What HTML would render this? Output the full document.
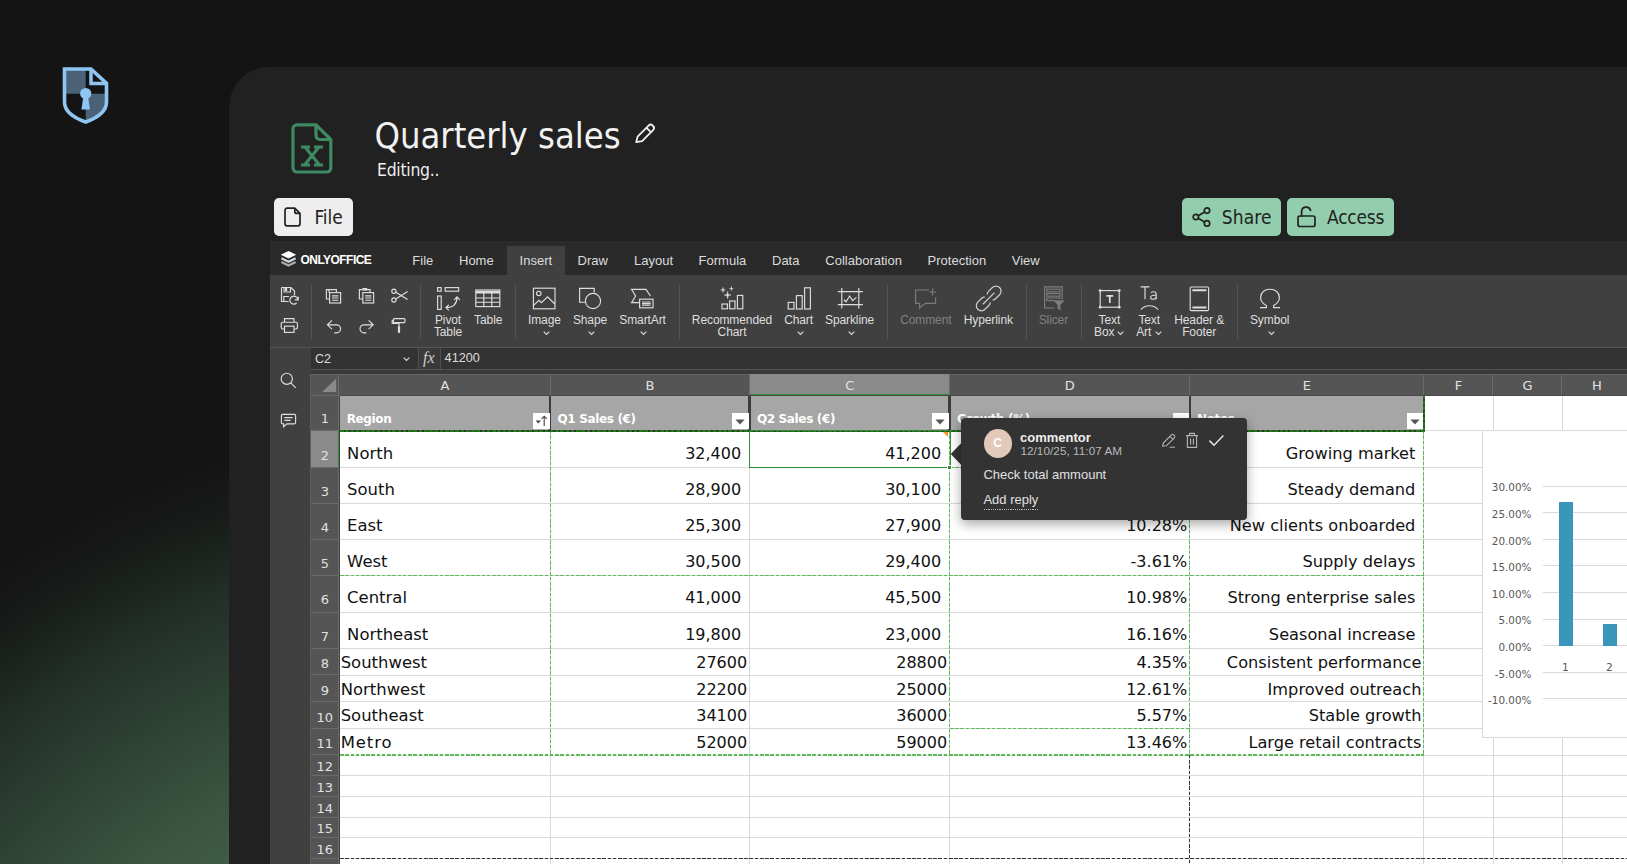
<!DOCTYPE html>
<html lang="en"><head><meta charset="utf-8"><title>Quarterly sales</title>
<style>
html,body{margin:0;padding:0;width:1627px;height:864px;overflow:hidden}
body{width:1627px;height:864px;overflow:hidden;position:relative;background:#141414;font-family:"Liberation Sans",sans-serif;}
#bg{position:absolute;left:0;top:0;width:1627px;height:864px;background:radial-gradient(circle 885px at 500px 1300px, #3f5c47 0%, #3f5c47 58%, #38523f 66%, #2e4235 75%, #233028 85%, #1c241e 90%, #171a18 95%, #141414 100%);}
div,span.t,svg.i{position:absolute;box-sizing:border-box}
span.t{white-space:nowrap;display:block}
svg.i{overflow:visible}
#root{position:relative;left:0;top:0;width:1627px;height:864px;overflow:hidden}
</style></head><body><div id="root"><div id="bg"></div>
<svg class="i" style="left:62px;top:66px;" width="48" height="59" viewBox="0 0 48 59">
<path d="M2.5 3 H29 L44.5 17.4 V36 C44.5 46 36 51.6 23.7 56 C11 51.6 2.5 46 2.5 36 Z" fill="#141414"/>
<path d="M2.5 3 H23.7 V27.7 H2.5 Z" fill="#4a6178"/>
<path d="M23.7 27.7 H44.5 V36 C44.5 46 36 51.6 23.7 56 Z" fill="#4a6178"/>
<path d="M2.5 3 H29 L44.5 17.4 V36 C44.5 46 36 51.6 23.7 56 C11 51.6 2.5 46 2.5 36 Z" fill="none" stroke="#8ec5f2" stroke-width="3.6" stroke-linejoin="miter"/>
<path d="M29 3 V17.4 H44.5" fill="none" stroke="#8ec5f2" stroke-width="3.5"/>
<circle cx="23.7" cy="27.5" r="5.6" fill="#8ec5f2"/>
<path d="M21.4 30 H26 L28 43.4 H19.4 Z" fill="#8ec5f2"/>
</svg>
<div style="left:229px;top:67px;width:1420px;height:820px;background:#212121;border-top-left-radius:40px;"></div>
<svg class="i" style="left:290px;top:122px;" width="44" height="54" viewBox="0 0 44 54">
<path d="M7 2.8 H26 L40.8 17.5 V46 a4 4 0 0 1 -4 4 H7 a4 4 0 0 1 -4 -4 V6.8 a4 4 0 0 1 4 -4 Z" fill="none" stroke="#3f8a62" stroke-width="3.2" stroke-linejoin="round"/>
<path d="M26 2.8 V13.5 a4 4 0 0 0 4 4 H40.8" fill="none" stroke="#3f8a62" stroke-width="3.2"/>
<path d="M11 25 h9 M24 25 h9 M11 43 h9 M24 43 h9 M15 25 L29.5 43 M29 25 L14.5 43" fill="none" stroke="#3f8a62" stroke-width="3"/>
</svg>
<span class="t" style="top:111.84px;font-size:36px;line-height:47px;color:#f2f2f2;font-family:'DejaVu Sans Condensed', 'DejaVu Sans', sans-serif;left:374.5px;">Quarterly sales</span>
<span class="t" style="top:158.78px;font-size:17.4px;line-height:23px;color:#eeeeee;font-family:'DejaVu Sans Condensed', 'DejaVu Sans', sans-serif;letter-spacing:-0.25px;left:377px;">Editing..</span>
<svg class="i" style="left:633px;top:122px;" width="24" height="23" viewBox="0 0 24 23">
<path d="M3.2 20.2 L4.6 14.6 L15.6 3.6 a2.9 2.9 0 0 1 4.1 0 l0.4 0.4 a2.9 2.9 0 0 1 0 4.1 L9.1 19.1 Z M13.6 5.8 L17.9 10.1" fill="none" stroke="#f0f0f0" stroke-width="1.8" stroke-linejoin="round"/>
</svg>
<div style="left:273.7px;top:198px;width:79.3px;height:38.2px;background:#eeeeee;border-radius:5px;"></div>
<svg class="i" style="left:283px;top:206px;" width="20" height="22" viewBox="0 0 20 22"><path d="M4 2.2 H11.8 L17 7.4 V17.8 a2 2 0 0 1 -2 2 H4 a2 2 0 0 1 -2 -2 V4.2 a2 2 0 0 1 2 -2 Z M11.8 2.2 V5.4 a2 2 0 0 0 2 2 H17" fill="none" stroke="#222" stroke-width="1.7" stroke-linejoin="round"/></svg>
<span class="t" style="top:204.53px;font-size:19px;line-height:25px;color:#222;font-family:'DejaVu Sans Condensed', 'DejaVu Sans', sans-serif;left:314.4px;">File</span>
<div style="left:1181.5px;top:198px;width:99.4px;height:38.2px;background:#92ceae;border-radius:5px;"></div>
<svg class="i" style="left:1191px;top:206px;" width="22" height="22" viewBox="0 0 22 22"><circle cx="16" cy="4.6" r="2.7" fill="none" stroke="#222" stroke-width="1.7"/><circle cx="4.8" cy="11" r="2.7" fill="none" stroke="#222" stroke-width="1.7"/><circle cx="16" cy="17.4" r="2.7" fill="none" stroke="#222" stroke-width="1.7"/><path d="M7.2 9.7 L13.6 6 M7.2 12.3 L13.6 16" stroke="#222" stroke-width="1.7"/></svg>
<span class="t" style="top:204.53px;font-size:19px;line-height:25px;color:#222;font-family:'DejaVu Sans Condensed', 'DejaVu Sans', sans-serif;letter-spacing:0.15px;left:1221.7px;">Share</span>
<div style="left:1286.8px;top:198px;width:107.4px;height:38.2px;background:#92ceae;border-radius:5px;"></div>
<svg class="i" style="left:1296px;top:205px;" width="22" height="24" viewBox="0 0 22 24"><rect x="2" y="11" width="17" height="10.5" rx="2" fill="none" stroke="#222" stroke-width="1.7"/><path d="M5.6 11 V6.6 a4.6 4.6 0 0 1 9 -1.2" fill="none" stroke="#222" stroke-width="1.7" stroke-linecap="round"/></svg>
<span class="t" style="top:204.53px;font-size:19px;line-height:25px;color:#222;font-family:'DejaVu Sans Condensed', 'DejaVu Sans', sans-serif;letter-spacing:-0.2px;left:1327px;">Access</span>
<div style="left:270px;top:241px;width:1400px;height:640px;background:#404040;"></div>
<div style="left:270px;top:241px;width:1400px;height:34px;background:#2a2a2a;"></div>
<div style="left:507px;top:245.5px;width:58px;height:29.5px;background:#404040;"></div>
<svg class="i" style="left:280px;top:250px;" width="17" height="17" viewBox="0 0 17 17">
<path d="M8.5 1 L16.2 4.8 L8.5 8.6 L0.8 4.8 Z" fill="#fff"/>
<path d="M1.4 8.3 L8.5 11.8 L15.6 8.3" fill="none" stroke="#d6d6d6" stroke-width="2.1"/>
<path d="M1.4 12 L8.5 15.5 L15.6 12" fill="none" stroke="#ababab" stroke-width="2.1"/>
</svg>
<span class="t" style="top:251.65px;font-size:12px;line-height:16px;color:#ffffff;font-weight:700;letter-spacing:-0.55px;left:300.5px;">ONLYOFFICE</span>
<span class="t" style="top:252.40px;font-size:13px;line-height:17px;color:#dcdcdc;left:412.3px;">File</span>
<span class="t" style="top:252.40px;font-size:13px;line-height:17px;color:#dcdcdc;left:459px;">Home</span>
<span class="t" style="top:252.40px;font-size:13px;line-height:17px;color:#dcdcdc;left:519.6px;">Insert</span>
<span class="t" style="top:252.40px;font-size:13px;line-height:17px;color:#dcdcdc;left:577.6px;">Draw</span>
<span class="t" style="top:252.40px;font-size:13px;line-height:17px;color:#dcdcdc;left:634px;">Layout</span>
<span class="t" style="top:252.40px;font-size:13px;line-height:17px;color:#dcdcdc;left:698.6px;">Formula</span>
<span class="t" style="top:252.40px;font-size:13px;line-height:17px;color:#dcdcdc;left:772px;">Data</span>
<span class="t" style="top:252.40px;font-size:13px;line-height:17px;color:#dcdcdc;left:825.3px;">Collaboration</span>
<span class="t" style="top:252.40px;font-size:13px;line-height:17px;color:#dcdcdc;left:927.6px;">Protection</span>
<span class="t" style="top:252.40px;font-size:13px;line-height:17px;color:#dcdcdc;left:1011.8px;">View</span>
<div style="left:270px;top:346.8px;width:1400px;height:1.1px;background:#565656;"></div>
<div style="left:311.2px;top:283.5px;width:1px;height:55.5px;background:#525252;"></div>
<div style="left:419.9px;top:283.5px;width:1px;height:55.5px;background:#525252;"></div>
<div style="left:515.3px;top:283.5px;width:1px;height:55.5px;background:#525252;"></div>
<div style="left:678.5px;top:283.5px;width:1px;height:55.5px;background:#525252;"></div>
<div style="left:887px;top:283.5px;width:1px;height:55.5px;background:#525252;"></div>
<div style="left:1026px;top:283.5px;width:1px;height:55.5px;background:#525252;"></div>
<div style="left:1081px;top:283.5px;width:1px;height:55.5px;background:#525252;"></div>
<div style="left:1236.8px;top:283.5px;width:1px;height:55.5px;background:#525252;"></div>
<svg class="i" style="left:280px;top:286px;" width="20" height="20" viewBox="0 0 20 20"><path d="M1.5 1.5 H11 L14.5 5 V9 M1.5 1.5 V15.5 H8.5 M4 1.5 V6 H10.5 V1.5 M3.8 15.5 V10.5 H9" fill="none" stroke="#dedede" stroke-width="1.15"/><rect x="5" y="2" width="2.2" height="3" fill="#dedede"/><path d="M17.8 13.6 a4 4 0 1 0 -1.2 3.4 M18.2 10.6 V13.9 H14.9" fill="none" stroke="#dedede" stroke-width="1.15"/></svg>
<svg class="i" style="left:280px;top:317px;" width="20" height="17" viewBox="0 0 20 17"><path d="M4.5 5 V1.6 H14 V5 M4.5 12 H2.6 a1.4 1.4 0 0 1 -1.4 -1.4 V6.6 a1.4 1.4 0 0 1 1.4 -1.4 H16 a1.4 1.4 0 0 1 1.4 1.4 V10.6 a1.4 1.4 0 0 1 -1.4 1.4 H14" fill="none" stroke="#dedede" stroke-width="1.15"/><rect x="4.5" y="9.2" width="9.5" height="6.2" fill="none" stroke="#dedede" stroke-width="1.15"/></svg>
<svg class="i" style="left:325px;top:288px;" width="18" height="17" viewBox="0 0 18 17"><path d="M4 4.4 V1.6 H11.4 V4.4 M4 11 H1.4 V1.6 H4" fill="none" stroke="#dedede" stroke-width="1.15"/><rect x="4.6" y="4.6" width="11" height="10.4" fill="none" stroke="#dedede" stroke-width="1.15"/><path d="M7 7.8 H13.4 M7 10 H13.4 M7 12.2 H13.4" fill="none" stroke="#dedede" stroke-width="1.15"/></svg>
<svg class="i" style="left:358px;top:287px;" width="18" height="18" viewBox="0 0 18 18"><path d="M4.4 12 H1.4 V2.6 H4.4 M9 2.6 H12 V5.4" fill="none" stroke="#dedede" stroke-width="1.15"/><rect x="4.4" y="1" width="4.8" height="2.6" fill="#dedede"/><rect x="4.8" y="5.6" width="10.8" height="10.4" fill="none" stroke="#dedede" stroke-width="1.15"/><path d="M7.2 8.8 H13.4 M7.2 11 H13.4 M7.2 13.2 H13.4" fill="none" stroke="#dedede" stroke-width="1.15"/></svg>
<svg class="i" style="left:391px;top:288px;" width="18" height="16" viewBox="0 0 18 16"><circle cx="2.9" cy="3.2" r="2.1" fill="none" stroke="#dedede" stroke-width="1.15"/><circle cx="2.9" cy="12" r="2.1" fill="none" stroke="#dedede" stroke-width="1.15"/><path d="M4.8 4.2 L16.6 11.6 M4.8 11 L16.6 3.4" fill="none" stroke="#dedede" stroke-width="1.15"/></svg>
<svg class="i" style="left:326px;top:319px;" width="17" height="16" viewBox="0 0 17 16"><path d="M6 1.4 L1.4 5.8 L6 10.2 M1.6 5.8 H10.6 a4 4 0 0 1 0 8 H8.2" fill="none" stroke="#dedede" stroke-width="1.15"/></svg>
<svg class="i" style="left:358px;top:319px;" width="17" height="16" viewBox="0 0 17 16"><path d="M10.6 1.4 L15.2 5.8 L10.6 10.2 M15 5.8 H6 a4 4 0 0 0 0 8 H8.4" fill="none" stroke="#dedede" stroke-width="1.15"/></svg>
<svg class="i" style="left:391px;top:317px;" width="17" height="18" viewBox="0 0 17 18"><rect x="2.4" y="1.6" width="11.6" height="4" rx="1" fill="none" stroke="#dedede" stroke-width="1.15"/><path d="M2.4 3.4 H1.2 V6.4 H8 V9" fill="none" stroke="#dedede" stroke-width="1.15"/><rect x="6.9" y="9" width="2.2" height="7" rx="0.8" fill="#dedede"/></svg>
<svg class="i" style="left:436px;top:286px;" width="26" height="26" viewBox="0 0 26 26"><rect x="1.6" y="1.6" width="3.6" height="3.6" fill="none" stroke="#dedede" stroke-width="1.15"/><rect x="9.2" y="1.6" width="13.4" height="3.6" fill="none" stroke="#dedede" stroke-width="1.15"/><rect x="1.6" y="10" width="3.6" height="13.4" fill="none" stroke="#dedede" stroke-width="1.15"/><path d="M10 21.6 C18 21.6 21 18 21 11 M18.2 13.8 L21 10.8 L23.8 13.8 M12.8 18.8 L10 21.6 L12.8 24.4" fill="none" stroke="#dedede" stroke-width="1.15"/></svg>
<span class="t" style="top:312.35px;font-size:12px;line-height:16px;color:#dedede;letter-spacing:-0.1px;left:388px;width:120px;text-align:center;">Pivot</span>
<span class="t" style="top:323.75px;font-size:12px;line-height:16px;color:#dedede;letter-spacing:-0.1px;left:388px;width:120px;text-align:center;">Table</span>
<svg class="i" style="left:475px;top:289px;" width="26" height="19" viewBox="0 0 26 19"><rect x="0.8" y="1" width="24" height="16.6" fill="none" stroke="#dedede" stroke-width="1.15"/><path d="M0.8 3.2 H24.8" stroke="#dedede" stroke-width="2.6"/><path d="M0.8 9 H24.8 M0.8 13.2 H24.8 M8.8 4 V17.6 M16.8 4 V17.6" fill="none" stroke="#dedede" stroke-width="1.15"/></svg>
<span class="t" style="top:312.35px;font-size:12px;line-height:16px;color:#dedede;letter-spacing:-0.1px;left:428.2px;width:120px;text-align:center;">Table</span>
<svg class="i" style="left:532px;top:287px;" width="25" height="23" viewBox="0 0 25 23"><rect x="1.4" y="1.2" width="21.6" height="20.6" fill="none" stroke="#dedede" stroke-width="1.15"/><circle cx="6.8" cy="6.4" r="2.2" fill="none" stroke="#dedede" stroke-width="1.15"/><path d="M1.6 18.4 L7 13.4 L9.4 15.6 L15.6 9.8 L22.8 17" fill="none" stroke="#dedede" stroke-width="1.15"/></svg>
<span class="t" style="top:312.35px;font-size:12px;line-height:16px;color:#dedede;letter-spacing:-0.1px;left:484.4px;width:120px;text-align:center;">Image</span>
<svg class="i" style="left:542.7px;top:330.6px;" width="7" height="4.5" viewBox="0 0 7 4.5"><path d="M0.7 0.7 L3.5 3.4 L6.3 0.7" fill="none" stroke="#dedede" stroke-width="1.1"/></svg>
<svg class="i" style="left:578px;top:287px;" width="25" height="23" viewBox="0 0 25 23"><path d="M8 15.2 H1.6 V1.4 H16.2 V5.6" fill="none" stroke="#dedede" stroke-width="1.15"/><circle cx="15" cy="14" r="7.6" fill="none" stroke="#dedede" stroke-width="1.15"/></svg>
<span class="t" style="top:312.35px;font-size:12px;line-height:16px;color:#dedede;letter-spacing:-0.1px;left:530px;width:120px;text-align:center;">Shape</span>
<svg class="i" style="left:587.5px;top:330.6px;" width="7" height="4.5" viewBox="0 0 7 4.5"><path d="M0.7 0.7 L3.5 3.4 L6.3 0.7" fill="none" stroke="#dedede" stroke-width="1.1"/></svg>
<svg class="i" style="left:630px;top:288px;" width="26" height="22" viewBox="0 0 26 22"><path d="M9 14.6 H1.6 L5.6 8 L1.6 1.4 H16 L20.4 8" fill="none" stroke="#dedede" stroke-width="1.15"/><rect x="9.6" y="11.2" width="13.4" height="8.6" fill="none" stroke="#dedede" stroke-width="1.15"/><path d="M12 14 H20.6 M12 15.6 H20.6 M12 17.2 H20.6" fill="none" stroke="#dedede" stroke-width="1.15"/></svg>
<span class="t" style="top:312.35px;font-size:12px;line-height:16px;color:#dedede;letter-spacing:-0.1px;left:582.6px;width:120px;text-align:center;">SmartArt</span>
<svg class="i" style="left:640.1px;top:330.6px;" width="7" height="4.5" viewBox="0 0 7 4.5"><path d="M0.7 0.7 L3.5 3.4 L6.3 0.7" fill="none" stroke="#dedede" stroke-width="1.1"/></svg>
<svg class="i" style="left:719px;top:286px;" width="27" height="25" viewBox="0 0 27 25"><rect x="3" y="18" width="5.4" height="4.8" fill="none" stroke="#dedede" stroke-width="1.15"/><rect x="10.6" y="15" width="5.4" height="7.8" fill="none" stroke="#dedede" stroke-width="1.15"/><rect x="18.4" y="9.4" width="5.4" height="13.4" fill="none" stroke="#dedede" stroke-width="1.15"/><path d="M8.6 5.4 C8.6 8 9.4 9 12 9 C9.4 9 8.6 10 8.6 12.6 C8.6 10 7.8 9 5.2 9 C7.8 9 8.6 8 8.6 5.4 Z M4 1.6 C4 3.4 4.4 4 6.2 4 C4.4 4 4 4.6 4 6.4 C4 4.6 3.6 4 1.8 4 C3.6 4 4 3.4 4 1.6 Z M12.4 0.6 C12.4 2 12.8 2.6 14.2 2.6 C12.8 2.6 12.4 3.2 12.4 4.6 C12.4 3.2 12 2.6 10.6 2.6 C12 2.6 12.4 2 12.4 0.6 Z" fill="#dedede" stroke="#dedede" stroke-width="0.6"/></svg>
<span class="t" style="top:312.35px;font-size:12px;line-height:16px;color:#dedede;letter-spacing:-0.1px;left:672px;width:120px;text-align:center;">Recommended</span>
<span class="t" style="top:323.75px;font-size:12px;line-height:16px;color:#dedede;letter-spacing:-0.1px;left:672px;width:120px;text-align:center;">Chart</span>
<svg class="i" style="left:786px;top:286px;" width="26" height="25" viewBox="0 0 26 25"><rect x="2.2" y="16.4" width="5.8" height="6.6" fill="none" stroke="#dedede" stroke-width="1.15"/><rect x="10.4" y="9.6" width="5.8" height="13.4" fill="none" stroke="#dedede" stroke-width="1.15"/><rect x="18.6" y="1.8" width="5.8" height="21.2" fill="none" stroke="#dedede" stroke-width="1.15"/></svg>
<span class="t" style="top:312.35px;font-size:12px;line-height:16px;color:#dedede;letter-spacing:-0.1px;left:738.6px;width:120px;text-align:center;">Chart</span>
<svg class="i" style="left:796.5px;top:330.6px;" width="7" height="4.5" viewBox="0 0 7 4.5"><path d="M0.7 0.7 L3.5 3.4 L6.3 0.7" fill="none" stroke="#dedede" stroke-width="1.1"/></svg>
<svg class="i" style="left:837px;top:287px;" width="27" height="23" viewBox="0 0 27 23"><path d="M0.8 4.6 H25.8 M0.8 17.6 H25.8 M4.8 1 V21.4 M21.8 1 V21.4 M6.8 12.8 L9 14.8 L12.6 9 L15.6 13.6 L19.4 10.4" fill="none" stroke="#dedede" stroke-width="1.15"/></svg>
<span class="t" style="top:312.35px;font-size:12px;line-height:16px;color:#dedede;letter-spacing:-0.1px;left:789.6px;width:120px;text-align:center;">Sparkline</span>
<svg class="i" style="left:847.5px;top:330.6px;" width="7" height="4.5" viewBox="0 0 7 4.5"><path d="M0.7 0.7 L3.5 3.4 L6.3 0.7" fill="none" stroke="#dedede" stroke-width="1.1"/></svg>
<svg class="i" style="left:914px;top:288px;" width="24" height="22" viewBox="0 0 24 22"><path d="M15 2 H1.6 V15.4 H5.6 V20 L11.4 15.4 H21.6 V9.4 M18.6 0.4 V7.4 M15.2 4 H22.2" fill="none" stroke="#7c7c7c" stroke-width="1.15"/></svg>
<span class="t" style="top:312.35px;font-size:12px;line-height:16px;color:#808080;letter-spacing:-0.1px;left:865.8px;width:120px;text-align:center;">Comment</span>
<svg class="i" style="left:975px;top:285px;" width="27" height="27" viewBox="0 0 27 27"><g transform="translate(13.7 13.4) rotate(-45)"><path d="M -1.6 -3.9 A 5.1 5.1 0 0 0 -4.9 -5.1 H -10.3 A 5.1 5.1 0 0 0 -10.3 5.1 H -4.9 A 5.1 5.1 0 0 0 -1.6 3.9" fill="none" stroke="#cdcdcd" stroke-width="1.25"/><path d="M -1.6 -3.9 A 5.1 5.1 0 0 0 -4.9 -5.1 H -10.3 A 5.1 5.1 0 0 0 -10.3 5.1 H -4.9 A 5.1 5.1 0 0 0 -1.6 3.9" transform="rotate(180)" fill="none" stroke="#cdcdcd" stroke-width="1.25"/><path d="M -8.2 0 H 8.2" fill="none" stroke="#cdcdcd" stroke-width="1.25"/></g></svg>
<span class="t" style="top:312.35px;font-size:12px;line-height:16px;color:#dedede;letter-spacing:-0.1px;left:928.3px;width:120px;text-align:center;">Hyperlink</span>
<svg class="i" style="left:1043px;top:286px;" width="23" height="26" viewBox="0 0 23 26"><path d="M11.4 22 H1.6 V0.9 H19.2 V13" fill="none" stroke="#7c7c7c" stroke-width="1.15"/><rect x="3.7" y="3.2" width="13.4" height="2.6" fill="none" stroke="#7c7c7c" stroke-width="1.15"/><rect x="3.7" y="7.6" width="13.4" height="2.6" fill="none" stroke="#7c7c7c" stroke-width="1.15"/><path d="M11 14.6 H3.7 V12 H17.1 V13" fill="none" stroke="#7c7c7c" stroke-width="1.15"/><path d="M10.2 14.2 H21.6 L17.4 19 V24.6 L14.6 22.6 V19 Z" fill="#7c7c7c"/></svg>
<span class="t" style="top:312.35px;font-size:12px;line-height:16px;color:#808080;letter-spacing:-0.1px;left:993.4px;width:120px;text-align:center;">Slicer</span>
<svg class="i" style="left:1098px;top:288px;" width="24" height="22" viewBox="0 0 24 22"><rect x="2.2" y="2.6" width="19" height="16.6" fill="none" stroke="#dedede" stroke-width="1.15" stroke-width="1.4"/><circle cx="2.2" cy="2.6" r="1.4" fill="#dedede"/><circle cx="21.2" cy="2.6" r="1.4" fill="#dedede"/><circle cx="2.2" cy="19.2" r="1.4" fill="#dedede"/><circle cx="21.2" cy="19.2" r="1.4" fill="#dedede"/><path d="M8.4 7.8 H15.2 M11.8 7.8 V15" stroke="#dedede" stroke-width="1.7" fill="none"/></svg>
<span class="t" style="top:312.35px;font-size:12px;line-height:16px;color:#dedede;letter-spacing:-0.1px;left:1049.4px;width:120px;text-align:center;">Text</span>
<span class="t" style="top:323.75px;font-size:12px;line-height:16px;color:#dedede;letter-spacing:-0.1px;left:1094px;">Box</span>
<svg class="i" style="left:1116.9px;top:331.2px;" width="7" height="4.5" viewBox="0 0 7 4.5"><path d="M0.7 0.7 L3.5 3.4 L6.3 0.7" fill="none" stroke="#dedede" stroke-width="1.1"/></svg>
<svg class="i" style="left:1140px;top:285px;" width="20" height="27" viewBox="0 0 20 27"><path d="M0.6 1.8 H9.4 M5 1.8 V14.2" fill="none" stroke="#dedede" stroke-width="1.15"/><path d="M11 7.6 C12.4 6.4 16.2 6.2 16.2 9 V14.2 M16.2 10 C13 10 10.6 10.6 10.6 12.4 C10.6 14.8 14.6 14.8 16.2 12.6" fill="none" stroke="#dedede" stroke-width="1.15"/><path d="M1 24.6 C5 19.4 14 19.4 18 24.6" fill="none" stroke="#dedede" stroke-width="1.15"/></svg>
<span class="t" style="top:312.35px;font-size:12px;line-height:16px;color:#dedede;letter-spacing:-0.1px;left:1089.2px;width:120px;text-align:center;">Text</span>
<span class="t" style="top:323.75px;font-size:12px;line-height:16px;color:#dedede;letter-spacing:-0.1px;left:1136.2px;">Art</span>
<svg class="i" style="left:1154.9px;top:331.2px;" width="7" height="4.5" viewBox="0 0 7 4.5"><path d="M0.7 0.7 L3.5 3.4 L6.3 0.7" fill="none" stroke="#dedede" stroke-width="1.1"/></svg>
<svg class="i" style="left:1189px;top:286px;" width="21" height="26" viewBox="0 0 21 26"><rect x="1.2" y="1" width="18.4" height="23.6" rx="1.2" fill="none" stroke="#dedede" stroke-width="1.15"/><path d="M3.4 4.2 H17.4 M3.4 21.4 H17.4" stroke="#dedede" stroke-width="2"/></svg>
<span class="t" style="top:312.35px;font-size:12px;line-height:16px;color:#dedede;letter-spacing:-0.1px;left:1139.2px;width:120px;text-align:center;">Header &amp;</span>
<span class="t" style="top:323.75px;font-size:12px;line-height:16px;color:#dedede;letter-spacing:-0.1px;left:1139.2px;width:120px;text-align:center;">Footer</span>
<svg class="i" style="left:1259px;top:288px;" width="22" height="21" viewBox="0 0 22 21"><path d="M1 19.6 H7.4 V17.4 C3.6 15.4 1.6 12.6 1.6 9.4 C1.6 4.6 5.6 1.2 11 1.2 C16.4 1.2 20.4 4.6 20.4 9.4 C20.4 12.6 18.4 15.4 14.6 17.4 V19.6 H21" fill="none" stroke="#dedede" stroke-width="1.15" stroke-width="1.3"/></svg>
<span class="t" style="top:312.35px;font-size:12px;line-height:16px;color:#dedede;letter-spacing:-0.1px;left:1209.7px;width:120px;text-align:center;">Symbol</span>
<svg class="i" style="left:1267.5px;top:330.6px;" width="7" height="4.5" viewBox="0 0 7 4.5"><path d="M0.7 0.7 L3.5 3.4 L6.3 0.7" fill="none" stroke="#dedede" stroke-width="1.1"/></svg>
<div style="left:311px;top:347.9px;width:1400px;height:20.7px;background:#333333;"></div>
<div style="left:418.2px;top:347.9px;width:22.6px;height:20.7px;background:#3a3a3a;"></div>
<span class="t" style="top:350.98px;font-size:12.5px;line-height:16px;color:#dcdcdc;left:315px;">C2</span>
<svg class="i" style="left:403.3px;top:356.8px;" width="7" height="4.5" viewBox="0 0 7 4.5"><path d="M0.7 0.7 L3.5 3.4 L6.3 0.7" fill="none" stroke="#dedede" stroke-width="1.1"/></svg>
<div style="left:417.7px;top:347.9px;width:1.3px;height:20.7px;background:#505050;"></div>
<div style="left:439.7px;top:347.9px;width:1.3px;height:20.7px;background:#505050;"></div>
<span class="t" style="left:423px;top:349.2px;font-size:16px;line-height:18px;color:#cfcfcf;font-family:'Liberation Serif',serif;font-style:italic;">fx</span>
<span class="t" style="top:350.41px;font-size:12.7px;line-height:17px;color:#dcdcdc;left:444.6px;">41200</span>
<div style="left:311px;top:368.5px;width:1400px;height:1.3px;background:#525252;"></div>
<div style="left:311px;top:369.8px;width:1400px;height:3.9px;background:#3a3a3a;"></div>
<svg class="i" style="left:280px;top:371.8px;" width="17" height="17" viewBox="0 0 17 17"><circle cx="6.8" cy="6.8" r="5.6" fill="none" stroke="#dedede" stroke-width="1.15" stroke-width="1.3"/><path d="M10.8 10.8 L15.8 15.8" fill="none" stroke="#dedede" stroke-width="1.15" stroke-width="1.3"/></svg>
<svg class="i" style="left:280px;top:413px;" width="18" height="16" viewBox="0 0 18 16"><path d="M2.6 1.4 H14.4 a1.2 1.2 0 0 1 1.2 1.2 V9.6 a1.2 1.2 0 0 1 -1.2 1.2 H7 L3.6 13.8 V10.8 H2.6 a1.2 1.2 0 0 1 -1.2 -1.2 V2.6 a1.2 1.2 0 0 1 1.2 -1.2 Z M4.4 4.6 H12.6 M4.4 7.4 H10.6" fill="none" stroke="#dedede" stroke-width="1.15" stroke-width="1.2"/></svg>
<div style="left:339.5px;top:396px;width:1300px;height:480px;background:#ffffff;"></div>
<div style="left:311px;top:374.4px;width:1400px;height:20.6px;background:#555555;"></div>
<div style="left:311px;top:394.6px;width:1400px;height:1.4px;background:#4a4a4a;"></div>
<div style="left:311px;top:394.6px;width:28.5px;height:1.4px;background:#6b6b6b;"></div>
<div style="left:311px;top:373.6px;width:1400px;height:1.1px;background:#666666;"></div>
<div style="left:311px;top:396px;width:27.5px;height:480px;background:#555555;"></div>
<div style="left:337.9px;top:374.4px;width:1px;height:500px;background:#6b6b6b;"></div>
<div style="left:310.1px;top:374.4px;width:1px;height:500px;background:#5e5e5e;"></div>
<svg class="i" style="left:322px;top:378px;" width="15" height="14.4" viewBox="0 0 15 14.4"><path d="M14.2 0.4 V14 H0.2 Z" fill="#8a8a8a"/></svg>
<div style="left:749.7px;top:374.4px;width:200px;height:20.6px;background:#8a8a8a;"></div>
<div style="left:749.7px;top:394px;width:200px;height:1.6px;background:#2f8c35;"></div>
<div style="left:311px;top:430.2px;width:27.5px;height:37.1px;background:#8a8a8a;"></div>
<div style="left:337.9px;top:430.2px;width:1.6px;height:37.1px;background:#2f8c35;"></div>
<div style="left:549.7px;top:374.4px;width:1.1px;height:20.6px;background:#6b6b6b;"></div>
<span class="t" style="top:377.30px;font-size:13px;line-height:17px;color:#e2e2e2;font-family:'DejaVu Sans', 'Liberation Sans', sans-serif;left:424.9px;width:40px;text-align:center;">A</span>
<div style="left:749.1px;top:374.4px;width:1.1px;height:20.6px;background:#6b6b6b;"></div>
<span class="t" style="top:377.30px;font-size:13px;line-height:17px;color:#e2e2e2;font-family:'DejaVu Sans', 'Liberation Sans', sans-serif;left:630px;width:40px;text-align:center;">B</span>
<div style="left:949.1px;top:374.4px;width:1.1px;height:20.6px;background:#6b6b6b;"></div>
<span class="t" style="top:377.30px;font-size:13px;line-height:17px;color:#e2e2e2;font-family:'DejaVu Sans', 'Liberation Sans', sans-serif;left:829.7px;width:40px;text-align:center;">C</span>
<div style="left:1189.2px;top:374.4px;width:1.1px;height:20.6px;background:#6b6b6b;"></div>
<span class="t" style="top:377.30px;font-size:13px;line-height:17px;color:#e2e2e2;font-family:'DejaVu Sans', 'Liberation Sans', sans-serif;left:1049.75px;width:40px;text-align:center;">D</span>
<div style="left:1423.2px;top:374.4px;width:1.1px;height:20.6px;background:#6b6b6b;"></div>
<span class="t" style="top:377.30px;font-size:13px;line-height:17px;color:#e2e2e2;font-family:'DejaVu Sans', 'Liberation Sans', sans-serif;left:1286.8px;width:40px;text-align:center;">E</span>
<div style="left:1492.4px;top:374.4px;width:1.1px;height:20.6px;background:#6b6b6b;"></div>
<span class="t" style="top:377.30px;font-size:13px;line-height:17px;color:#e2e2e2;font-family:'DejaVu Sans', 'Liberation Sans', sans-serif;left:1438.4px;width:40px;text-align:center;">F</span>
<div style="left:1561.4px;top:374.4px;width:1.1px;height:20.6px;background:#6b6b6b;"></div>
<span class="t" style="top:377.30px;font-size:13px;line-height:17px;color:#e2e2e2;font-family:'DejaVu Sans', 'Liberation Sans', sans-serif;left:1507.5px;width:40px;text-align:center;">G</span>
<div style="left:1639.4px;top:374.4px;width:1.1px;height:20.6px;background:#6b6b6b;"></div>
<span class="t" style="top:377.30px;font-size:13px;line-height:17px;color:#e2e2e2;font-family:'DejaVu Sans', 'Liberation Sans', sans-serif;left:1577px;width:40px;text-align:center;">H</span>
<div style="left:311px;top:429.6px;width:27.9px;height:1.1px;background:#6b6b6b;"></div>
<div style="left:311px;top:466.7px;width:27.9px;height:1.1px;background:#6b6b6b;"></div>
<div style="left:311px;top:502.8px;width:27.9px;height:1.1px;background:#6b6b6b;"></div>
<div style="left:311px;top:539px;width:27.9px;height:1.1px;background:#6b6b6b;"></div>
<div style="left:311px;top:575.1px;width:27.9px;height:1.1px;background:#6b6b6b;"></div>
<div style="left:311px;top:611.5px;width:27.9px;height:1.1px;background:#6b6b6b;"></div>
<div style="left:311px;top:647.9px;width:27.9px;height:1.1px;background:#6b6b6b;"></div>
<div style="left:311px;top:674.4px;width:27.9px;height:1.1px;background:#6b6b6b;"></div>
<div style="left:311px;top:700.9px;width:27.9px;height:1.1px;background:#6b6b6b;"></div>
<div style="left:311px;top:727.7px;width:27.9px;height:1.1px;background:#6b6b6b;"></div>
<div style="left:311px;top:754.4px;width:27.9px;height:1.1px;background:#6b6b6b;"></div>
<div style="left:311px;top:775.2px;width:27.9px;height:1.1px;background:#6b6b6b;"></div>
<div style="left:311px;top:796px;width:27.9px;height:1.1px;background:#6b6b6b;"></div>
<div style="left:311px;top:816.8px;width:27.9px;height:1.1px;background:#6b6b6b;"></div>
<div style="left:311px;top:837.2px;width:27.9px;height:1.1px;background:#6b6b6b;"></div>
<div style="left:311px;top:857.7px;width:27.9px;height:1.1px;background:#6b6b6b;"></div>
<div style="left:311px;top:878.4px;width:27.9px;height:1.1px;background:#6b6b6b;"></div>
<span class="t" style="top:410.20px;font-size:13px;line-height:17px;color:#e0e0e0;font-family:'DejaVu Sans', 'Liberation Sans', sans-serif;left:309.8px;width:30px;text-align:center;">1</span>
<span class="t" style="top:446.60px;font-size:13px;line-height:17px;color:#e0e0e0;font-family:'DejaVu Sans', 'Liberation Sans', sans-serif;left:309.8px;width:30px;text-align:center;">2</span>
<span class="t" style="top:482.70px;font-size:13px;line-height:17px;color:#e0e0e0;font-family:'DejaVu Sans', 'Liberation Sans', sans-serif;left:309.8px;width:30px;text-align:center;">3</span>
<span class="t" style="top:518.90px;font-size:13px;line-height:17px;color:#e0e0e0;font-family:'DejaVu Sans', 'Liberation Sans', sans-serif;left:309.8px;width:30px;text-align:center;">4</span>
<span class="t" style="top:555.00px;font-size:13px;line-height:17px;color:#e0e0e0;font-family:'DejaVu Sans', 'Liberation Sans', sans-serif;left:309.8px;width:30px;text-align:center;">5</span>
<span class="t" style="top:591.40px;font-size:13px;line-height:17px;color:#e0e0e0;font-family:'DejaVu Sans', 'Liberation Sans', sans-serif;left:309.8px;width:30px;text-align:center;">6</span>
<span class="t" style="top:627.80px;font-size:13px;line-height:17px;color:#e0e0e0;font-family:'DejaVu Sans', 'Liberation Sans', sans-serif;left:309.8px;width:30px;text-align:center;">7</span>
<span class="t" style="top:655.40px;font-size:13px;line-height:17px;color:#e0e0e0;font-family:'DejaVu Sans', 'Liberation Sans', sans-serif;left:309.8px;width:30px;text-align:center;">8</span>
<span class="t" style="top:681.90px;font-size:13px;line-height:17px;color:#e0e0e0;font-family:'DejaVu Sans', 'Liberation Sans', sans-serif;left:309.8px;width:30px;text-align:center;">9</span>
<span class="t" style="top:708.70px;font-size:13px;line-height:17px;color:#e0e0e0;font-family:'DejaVu Sans', 'Liberation Sans', sans-serif;left:309.8px;width:30px;text-align:center;">10</span>
<span class="t" style="top:735.40px;font-size:13px;line-height:17px;color:#e0e0e0;font-family:'DejaVu Sans', 'Liberation Sans', sans-serif;left:309.8px;width:30px;text-align:center;">11</span>
<span class="t" style="top:758.00px;font-size:13px;line-height:17px;color:#e0e0e0;font-family:'DejaVu Sans', 'Liberation Sans', sans-serif;left:309.8px;width:30px;text-align:center;">12</span>
<span class="t" style="top:778.80px;font-size:13px;line-height:17px;color:#e0e0e0;font-family:'DejaVu Sans', 'Liberation Sans', sans-serif;left:309.8px;width:30px;text-align:center;">13</span>
<span class="t" style="top:799.60px;font-size:13px;line-height:17px;color:#e0e0e0;font-family:'DejaVu Sans', 'Liberation Sans', sans-serif;left:309.8px;width:30px;text-align:center;">14</span>
<span class="t" style="top:820.00px;font-size:13px;line-height:17px;color:#e0e0e0;font-family:'DejaVu Sans', 'Liberation Sans', sans-serif;left:309.8px;width:30px;text-align:center;">15</span>
<span class="t" style="top:840.50px;font-size:13px;line-height:17px;color:#e0e0e0;font-family:'DejaVu Sans', 'Liberation Sans', sans-serif;left:309.8px;width:30px;text-align:center;">16</span>
<div style="left:339.5px;top:429.7px;width:1300px;height:1px;background:#d9d9d9;"></div>
<div style="left:339.5px;top:466.8px;width:1300px;height:1px;background:#d9d9d9;"></div>
<div style="left:339.5px;top:502.9px;width:1300px;height:1px;background:#d9d9d9;"></div>
<div style="left:339.5px;top:539.1px;width:1300px;height:1px;background:#d9d9d9;"></div>
<div style="left:339.5px;top:575.2px;width:1300px;height:1px;background:#d9d9d9;"></div>
<div style="left:339.5px;top:611.6px;width:1300px;height:1px;background:#d9d9d9;"></div>
<div style="left:339.5px;top:648px;width:1300px;height:1px;background:#d9d9d9;"></div>
<div style="left:339.5px;top:674.5px;width:1300px;height:1px;background:#d9d9d9;"></div>
<div style="left:339.5px;top:701px;width:1300px;height:1px;background:#d9d9d9;"></div>
<div style="left:339.5px;top:727.8px;width:1300px;height:1px;background:#d9d9d9;"></div>
<div style="left:339.5px;top:754.5px;width:1300px;height:1px;background:#d9d9d9;"></div>
<div style="left:339.5px;top:775.3px;width:1300px;height:1px;background:#d9d9d9;"></div>
<div style="left:339.5px;top:796.1px;width:1300px;height:1px;background:#d9d9d9;"></div>
<div style="left:339.5px;top:816.9px;width:1300px;height:1px;background:#d9d9d9;"></div>
<div style="left:339.5px;top:837.3px;width:1300px;height:1px;background:#d9d9d9;"></div>
<div style="left:339.5px;top:857.8px;width:1300px;height:1px;background:#d9d9d9;"></div>
<div style="left:549.8px;top:396px;width:1px;height:480px;background:#d9d9d9;"></div>
<div style="left:749.2px;top:396px;width:1px;height:480px;background:#d9d9d9;"></div>
<div style="left:949.2px;top:396px;width:1px;height:480px;background:#d9d9d9;"></div>
<div style="left:1189.3px;top:396px;width:1px;height:480px;background:#d9d9d9;"></div>
<div style="left:1423.3px;top:396px;width:1px;height:480px;background:#d9d9d9;"></div>
<div style="left:1492.5px;top:396px;width:1px;height:480px;background:#d9d9d9;"></div>
<div style="left:1561.5px;top:396px;width:1px;height:480px;background:#d9d9d9;"></div>
<div style="left:339.5px;top:396px;width:1084.3px;height:34.2px;background:#a6a6a6;"></div>
<div style="left:549px;top:395.5px;width:2.4px;height:34.7px;background:#3c3c3c;"></div>
<div style="left:748.4px;top:395.5px;width:2.4px;height:34.7px;background:#3c3c3c;"></div>
<div style="left:948.4px;top:395.5px;width:2.4px;height:34.7px;background:#3c3c3c;"></div>
<div style="left:1188.5px;top:395.5px;width:2.4px;height:34.7px;background:#3c3c3c;"></div>
<div style="left:339.5px;top:395.4px;width:1084.3px;height:1px;background:#4a4a4a;"></div>
<span class="t" style="top:411.15px;font-size:12px;line-height:16px;color:#ffffff;font-family:'DejaVu Sans', 'Liberation Sans', sans-serif;font-weight:700;letter-spacing:-0.35px;left:346.7px;">Region</span>
<span class="t" style="top:411.15px;font-size:12px;line-height:16px;color:#ffffff;font-family:'DejaVu Sans', 'Liberation Sans', sans-serif;font-weight:700;letter-spacing:-0.35px;left:557.5px;">Q1 Sales (€)</span>
<span class="t" style="top:411.15px;font-size:12px;line-height:16px;color:#ffffff;font-family:'DejaVu Sans', 'Liberation Sans', sans-serif;font-weight:700;letter-spacing:-0.35px;left:756.9px;">Q2 Sales (€)</span>
<span class="t" style="top:411.15px;font-size:12px;line-height:16px;color:#ffffff;font-family:'DejaVu Sans', 'Liberation Sans', sans-serif;font-weight:700;letter-spacing:-0.35px;left:956.9px;">Growth (%)</span>
<span class="t" style="top:411.15px;font-size:12px;line-height:16px;color:#ffffff;font-family:'DejaVu Sans', 'Liberation Sans', sans-serif;font-weight:700;letter-spacing:-0.35px;left:1197px;">Notes</span>
<div style="left:533px;top:412.9px;width:16.5px;height:16.5px;background:#ffffff;"></div>
<svg class="i" style="left:533px;top:413px;" width="16" height="16.2" viewBox="0 0 16 16.2"><path d="M2.6 7.6 H8 L5.3 10.6 Z" fill="#444"/><path d="M11.2 13 V3.4 M8.6 6 L11.2 3.2 L13.8 6" fill="none" stroke="#444" stroke-width="1.1"/></svg>
<div style="left:732.4px;top:412.9px;width:16.5px;height:16.5px;background:#ffffff;"></div>
<svg class="i" style="left:732.4px;top:413px;" width="16" height="16.2" viewBox="0 0 16 16.2"><path d="M3.4 6.6 H12.6 L8 11.4 Z" fill="#555"/></svg>
<div style="left:932.4px;top:412.9px;width:16.5px;height:16.5px;background:#ffffff;"></div>
<svg class="i" style="left:932.4px;top:413px;" width="16" height="16.2" viewBox="0 0 16 16.2"><path d="M3.4 6.6 H12.6 L8 11.4 Z" fill="#555"/></svg>
<div style="left:1172.5px;top:412.9px;width:16.5px;height:16.5px;background:#ffffff;"></div>
<svg class="i" style="left:1172.5px;top:413px;" width="16" height="16.2" viewBox="0 0 16 16.2"><path d="M3.4 6.6 H12.6 L8 11.4 Z" fill="#555"/></svg>
<div style="left:1406.5px;top:412.9px;width:16.5px;height:16.5px;background:#ffffff;"></div>
<svg class="i" style="left:1406.5px;top:413px;" width="16" height="16.2" viewBox="0 0 16 16.2"><path d="M3.4 6.6 H12.6 L8 11.4 Z" fill="#555"/></svg>
<span class="t" style="top:442.51px;font-size:16.45px;line-height:21px;color:#111111;font-family:'DejaVu Sans', 'Liberation Sans', sans-serif;left:347.1px;">North</span>
<span class="t" style="top:442.66px;font-size:16px;line-height:21px;color:#111111;font-family:'DejaVu Sans', 'Liberation Sans', sans-serif;right:885.9px;text-align:right;">32,400</span>
<span class="t" style="top:442.66px;font-size:16px;line-height:21px;color:#111111;font-family:'DejaVu Sans', 'Liberation Sans', sans-serif;right:685.9px;text-align:right;">41,200</span>
<span class="t" style="top:442.66px;font-size:16px;line-height:21px;color:#111111;font-family:'DejaVu Sans', 'Liberation Sans', sans-serif;right:439.8px;text-align:right;">27.16%</span>
<span class="t" style="top:442.59px;font-size:16.2px;line-height:21px;color:#111111;font-family:'DejaVu Sans', 'Liberation Sans', sans-serif;right:211.6px;text-align:right;">Growing market</span>
<span class="t" style="top:478.61px;font-size:16.45px;line-height:21px;color:#111111;font-family:'DejaVu Sans', 'Liberation Sans', sans-serif;left:347.1px;">South</span>
<span class="t" style="top:478.76px;font-size:16px;line-height:21px;color:#111111;font-family:'DejaVu Sans', 'Liberation Sans', sans-serif;right:885.9px;text-align:right;">28,900</span>
<span class="t" style="top:478.76px;font-size:16px;line-height:21px;color:#111111;font-family:'DejaVu Sans', 'Liberation Sans', sans-serif;right:685.9px;text-align:right;">30,100</span>
<span class="t" style="top:478.76px;font-size:16px;line-height:21px;color:#111111;font-family:'DejaVu Sans', 'Liberation Sans', sans-serif;right:439.8px;text-align:right;">4.15%</span>
<span class="t" style="top:478.69px;font-size:16.2px;line-height:21px;color:#111111;font-family:'DejaVu Sans', 'Liberation Sans', sans-serif;right:211.6px;text-align:right;">Steady demand</span>
<span class="t" style="top:514.81px;font-size:16.45px;line-height:21px;color:#111111;font-family:'DejaVu Sans', 'Liberation Sans', sans-serif;left:347.1px;">East</span>
<span class="t" style="top:514.96px;font-size:16px;line-height:21px;color:#111111;font-family:'DejaVu Sans', 'Liberation Sans', sans-serif;right:885.9px;text-align:right;">25,300</span>
<span class="t" style="top:514.96px;font-size:16px;line-height:21px;color:#111111;font-family:'DejaVu Sans', 'Liberation Sans', sans-serif;right:685.9px;text-align:right;">27,900</span>
<span class="t" style="top:514.96px;font-size:16px;line-height:21px;color:#111111;font-family:'DejaVu Sans', 'Liberation Sans', sans-serif;right:439.8px;text-align:right;">10.28%</span>
<span class="t" style="top:514.89px;font-size:16.2px;line-height:21px;color:#111111;font-family:'DejaVu Sans', 'Liberation Sans', sans-serif;right:211.6px;text-align:right;">New clients onboarded</span>
<span class="t" style="top:550.91px;font-size:16.45px;line-height:21px;color:#111111;font-family:'DejaVu Sans', 'Liberation Sans', sans-serif;left:347.1px;">West</span>
<span class="t" style="top:551.06px;font-size:16px;line-height:21px;color:#111111;font-family:'DejaVu Sans', 'Liberation Sans', sans-serif;right:885.9px;text-align:right;">30,500</span>
<span class="t" style="top:551.06px;font-size:16px;line-height:21px;color:#111111;font-family:'DejaVu Sans', 'Liberation Sans', sans-serif;right:685.9px;text-align:right;">29,400</span>
<span class="t" style="top:551.06px;font-size:16px;line-height:21px;color:#111111;font-family:'DejaVu Sans', 'Liberation Sans', sans-serif;right:439.8px;text-align:right;">-3.61%</span>
<span class="t" style="top:550.99px;font-size:16.2px;line-height:21px;color:#111111;font-family:'DejaVu Sans', 'Liberation Sans', sans-serif;right:211.6px;text-align:right;">Supply delays</span>
<span class="t" style="top:587.31px;font-size:16.45px;line-height:21px;color:#111111;font-family:'DejaVu Sans', 'Liberation Sans', sans-serif;left:347.1px;">Central</span>
<span class="t" style="top:587.46px;font-size:16px;line-height:21px;color:#111111;font-family:'DejaVu Sans', 'Liberation Sans', sans-serif;right:885.9px;text-align:right;">41,000</span>
<span class="t" style="top:587.46px;font-size:16px;line-height:21px;color:#111111;font-family:'DejaVu Sans', 'Liberation Sans', sans-serif;right:685.9px;text-align:right;">45,500</span>
<span class="t" style="top:587.46px;font-size:16px;line-height:21px;color:#111111;font-family:'DejaVu Sans', 'Liberation Sans', sans-serif;right:439.8px;text-align:right;">10.98%</span>
<span class="t" style="top:587.39px;font-size:16.2px;line-height:21px;color:#111111;font-family:'DejaVu Sans', 'Liberation Sans', sans-serif;right:211.6px;text-align:right;">Strong enterprise sales</span>
<span class="t" style="top:623.71px;font-size:16.45px;line-height:21px;color:#111111;font-family:'DejaVu Sans', 'Liberation Sans', sans-serif;left:347.1px;">Northeast</span>
<span class="t" style="top:623.86px;font-size:16px;line-height:21px;color:#111111;font-family:'DejaVu Sans', 'Liberation Sans', sans-serif;right:885.9px;text-align:right;">19,800</span>
<span class="t" style="top:623.86px;font-size:16px;line-height:21px;color:#111111;font-family:'DejaVu Sans', 'Liberation Sans', sans-serif;right:685.9px;text-align:right;">23,000</span>
<span class="t" style="top:623.86px;font-size:16px;line-height:21px;color:#111111;font-family:'DejaVu Sans', 'Liberation Sans', sans-serif;right:439.8px;text-align:right;">16.16%</span>
<span class="t" style="top:623.79px;font-size:16.2px;line-height:21px;color:#111111;font-family:'DejaVu Sans', 'Liberation Sans', sans-serif;right:211.6px;text-align:right;">Seasonal increase</span>
<span class="t" style="top:652.01px;font-size:16.45px;line-height:21px;color:#111111;font-family:'DejaVu Sans', 'Liberation Sans', sans-serif;left:340.7px;">Southwest</span>
<span class="t" style="top:652.16px;font-size:16px;line-height:21px;color:#111111;font-family:'DejaVu Sans', 'Liberation Sans', sans-serif;right:879.9px;text-align:right;">27600</span>
<span class="t" style="top:652.16px;font-size:16px;line-height:21px;color:#111111;font-family:'DejaVu Sans', 'Liberation Sans', sans-serif;right:679.9px;text-align:right;">28800</span>
<span class="t" style="top:652.16px;font-size:16px;line-height:21px;color:#111111;font-family:'DejaVu Sans', 'Liberation Sans', sans-serif;right:439.8px;text-align:right;">4.35%</span>
<span class="t" style="top:652.09px;font-size:16.2px;line-height:21px;color:#111111;font-family:'DejaVu Sans', 'Liberation Sans', sans-serif;right:205.6px;text-align:right;">Consistent performance</span>
<span class="t" style="top:678.51px;font-size:16.45px;line-height:21px;color:#111111;font-family:'DejaVu Sans', 'Liberation Sans', sans-serif;left:340.7px;">Northwest</span>
<span class="t" style="top:678.66px;font-size:16px;line-height:21px;color:#111111;font-family:'DejaVu Sans', 'Liberation Sans', sans-serif;right:879.9px;text-align:right;">22200</span>
<span class="t" style="top:678.66px;font-size:16px;line-height:21px;color:#111111;font-family:'DejaVu Sans', 'Liberation Sans', sans-serif;right:679.9px;text-align:right;">25000</span>
<span class="t" style="top:678.66px;font-size:16px;line-height:21px;color:#111111;font-family:'DejaVu Sans', 'Liberation Sans', sans-serif;right:439.8px;text-align:right;">12.61%</span>
<span class="t" style="top:678.59px;font-size:16.2px;line-height:21px;color:#111111;font-family:'DejaVu Sans', 'Liberation Sans', sans-serif;right:205.6px;text-align:right;">Improved outreach</span>
<span class="t" style="top:705.31px;font-size:16.45px;line-height:21px;color:#111111;font-family:'DejaVu Sans', 'Liberation Sans', sans-serif;left:340.7px;">Southeast</span>
<span class="t" style="top:705.46px;font-size:16px;line-height:21px;color:#111111;font-family:'DejaVu Sans', 'Liberation Sans', sans-serif;right:879.9px;text-align:right;">34100</span>
<span class="t" style="top:705.46px;font-size:16px;line-height:21px;color:#111111;font-family:'DejaVu Sans', 'Liberation Sans', sans-serif;right:679.9px;text-align:right;">36000</span>
<span class="t" style="top:705.46px;font-size:16px;line-height:21px;color:#111111;font-family:'DejaVu Sans', 'Liberation Sans', sans-serif;right:439.8px;text-align:right;">5.57%</span>
<span class="t" style="top:705.39px;font-size:16.2px;line-height:21px;color:#111111;font-family:'DejaVu Sans', 'Liberation Sans', sans-serif;right:205.6px;text-align:right;">Stable growth</span>
<span class="t" style="top:732.01px;font-size:16.45px;line-height:21px;color:#111111;font-family:'DejaVu Sans', 'Liberation Sans', sans-serif;letter-spacing:0.9px;left:340.7px;">Metro</span>
<span class="t" style="top:732.16px;font-size:16px;line-height:21px;color:#111111;font-family:'DejaVu Sans', 'Liberation Sans', sans-serif;right:879.9px;text-align:right;">52000</span>
<span class="t" style="top:732.16px;font-size:16px;line-height:21px;color:#111111;font-family:'DejaVu Sans', 'Liberation Sans', sans-serif;right:679.9px;text-align:right;">59000</span>
<span class="t" style="top:732.16px;font-size:16px;line-height:21px;color:#111111;font-family:'DejaVu Sans', 'Liberation Sans', sans-serif;right:439.8px;text-align:right;">13.46%</span>
<span class="t" style="top:732.09px;font-size:16.2px;line-height:21px;color:#111111;font-family:'DejaVu Sans', 'Liberation Sans', sans-serif;right:205.6px;text-align:right;">Large retail contracts</span>
<div style="left:339.5px;top:575.125px;width:1084.3px;height:1.15px;background:repeating-linear-gradient(90deg,#5cba57 0 3.5px,transparent 3.5px 5.25px);"></div>
<div style="left:339.5px;top:754.425px;width:1084.3px;height:1.15px;background:repeating-linear-gradient(90deg,#5cba57 0 3.5px,transparent 3.5px 5.25px);"></div>
<div style="left:949.7px;top:727.725px;width:240.1px;height:1.15px;background:repeating-linear-gradient(90deg,#5cba57 0 3.5px,transparent 3.5px 5.25px);"></div>
<div style="left:949.7px;top:466.725px;width:240.1px;height:1.15px;background:repeating-linear-gradient(90deg,#5cba57 0 3.5px,transparent 3.5px 5.25px);"></div>
<div style="left:549.725px;top:430.2px;width:1.15px;height:324.8px;background:repeating-linear-gradient(180deg,#5cba57 0 3.5px,transparent 3.5px 5.25px);"></div>
<div style="left:949.125px;top:430.2px;width:1.15px;height:324.8px;background:repeating-linear-gradient(180deg,#5cba57 0 3.5px,transparent 3.5px 5.25px);"></div>
<div style="left:1189.22px;top:430.2px;width:1.15px;height:324.8px;background:repeating-linear-gradient(180deg,#5cba57 0 3.5px,transparent 3.5px 5.25px);"></div>
<div style="left:1423.22px;top:430.2px;width:1.15px;height:324.8px;background:repeating-linear-gradient(180deg,#5cba57 0 3.5px,transparent 3.5px 5.25px);"></div>
<div style="left:339.5px;top:429.85px;width:1085.3px;height:2.1px;background:repeating-linear-gradient(90deg,#1f7a17 0 3.5px,#333333 3.5px 5.25px);"></div>
<div style="left:1422.8px;top:396px;width:2px;height:35.2px;background:repeating-linear-gradient(180deg,#1f7a17 0 3.5px,#333333 3.5px 5.25px);"></div>
<div style="left:339.5px;top:857.75px;width:1300.5px;height:1.1px;background:repeating-linear-gradient(90deg,#333333 0 3.5px,transparent 3.5px 5.25px);"></div>
<div style="left:1189.25px;top:755px;width:1.1px;height:115px;background:repeating-linear-gradient(180deg,#333333 0 3.5px,transparent 3.5px 5.25px);"></div>
<div style="left:748.9px;top:430px;width:201.8px;height:38.1px;border:solid #2f8c35;border-width:1.8px 1.4px 1.8px 1.8px;"></div>
<div style="left:947.1px;top:464.7px;width:5.2px;height:5.2px;background:#2f8c35;border:1px solid #fff;"></div>
<svg class="i" style="left:943.3px;top:432.1px;" width="5" height="5" viewBox="0 0 5 5"><path d="M0 0 H5 V5 Z" fill="#f5941f"/></svg>
<div style="left:1481.7px;top:429.8px;width:200px;height:308px;background:#ffffff;border:1px solid #d9d9d9;"></div>
<div style="left:1543px;top:485.5px;width:100px;height:1px;background:#d9d9d9;"></div>
<span class="t" style="top:480.30px;font-size:10.4px;line-height:14px;color:#595959;font-family:'DejaVu Sans', 'Liberation Sans', sans-serif;right:95.6px;text-align:right;">30.00%</span>
<div style="left:1543px;top:512.1px;width:100px;height:1px;background:#d9d9d9;"></div>
<span class="t" style="top:506.90px;font-size:10.4px;line-height:14px;color:#595959;font-family:'DejaVu Sans', 'Liberation Sans', sans-serif;right:95.6px;text-align:right;">25.00%</span>
<div style="left:1543px;top:538.7px;width:100px;height:1px;background:#d9d9d9;"></div>
<span class="t" style="top:533.50px;font-size:10.4px;line-height:14px;color:#595959;font-family:'DejaVu Sans', 'Liberation Sans', sans-serif;right:95.6px;text-align:right;">20.00%</span>
<div style="left:1543px;top:565.3px;width:100px;height:1px;background:#d9d9d9;"></div>
<span class="t" style="top:560.10px;font-size:10.4px;line-height:14px;color:#595959;font-family:'DejaVu Sans', 'Liberation Sans', sans-serif;right:95.6px;text-align:right;">15.00%</span>
<div style="left:1543px;top:591.9px;width:100px;height:1px;background:#d9d9d9;"></div>
<span class="t" style="top:586.70px;font-size:10.4px;line-height:14px;color:#595959;font-family:'DejaVu Sans', 'Liberation Sans', sans-serif;right:95.6px;text-align:right;">10.00%</span>
<div style="left:1543px;top:618.5px;width:100px;height:1px;background:#d9d9d9;"></div>
<span class="t" style="top:613.30px;font-size:10.4px;line-height:14px;color:#595959;font-family:'DejaVu Sans', 'Liberation Sans', sans-serif;right:95.6px;text-align:right;">5.00%</span>
<div style="left:1543px;top:645.1px;width:100px;height:1px;background:#d9d9d9;"></div>
<span class="t" style="top:639.90px;font-size:10.4px;line-height:14px;color:#595959;font-family:'DejaVu Sans', 'Liberation Sans', sans-serif;right:95.6px;text-align:right;">0.00%</span>
<div style="left:1543px;top:671.7px;width:100px;height:1px;background:#d9d9d9;"></div>
<span class="t" style="top:666.50px;font-size:10.4px;line-height:14px;color:#595959;font-family:'DejaVu Sans', 'Liberation Sans', sans-serif;right:95.6px;text-align:right;">-5.00%</span>
<div style="left:1543px;top:698.3px;width:100px;height:1px;background:#d9d9d9;"></div>
<span class="t" style="top:693.10px;font-size:10.4px;line-height:14px;color:#595959;font-family:'DejaVu Sans', 'Liberation Sans', sans-serif;right:95.6px;text-align:right;">-10.00%</span>
<div style="left:1559px;top:502.2px;width:13.8px;height:143.4px;background:#3a96ba;"></div>
<div style="left:1603.1px;top:624.3px;width:13.9px;height:21.3px;background:#3a96ba;"></div>
<span class="t" style="top:660.33px;font-size:10.6px;line-height:14px;color:#595959;font-family:'DejaVu Sans', 'Liberation Sans', sans-serif;left:1555.4px;width:20px;text-align:center;">1</span>
<span class="t" style="top:660.33px;font-size:10.6px;line-height:14px;color:#595959;font-family:'DejaVu Sans', 'Liberation Sans', sans-serif;left:1599.4px;width:20px;text-align:center;">2</span>
<svg class="i" style="left:950.4px;top:441.6px;" width="12" height="24" viewBox="0 0 12 24"><path d="M11.6 0.8 L0.7 12 L11.6 23.2 Z" fill="#333333"/></svg>
<div style="left:961.2px;top:417.7px;width:285.6px;height:102.7px;background:#333333;border-radius:4px;box-shadow:0 4px 12px rgba(0,0,0,.35);"></div>
<div style="left:983.5px;top:428.9px;width:28.3px;height:28.8px;background:#e2c9ba;border-radius:50%;"></div>
<span class="t" style="top:435.25px;font-size:12px;line-height:16px;color:#ffffff;font-weight:700;left:983.7px;width:28px;text-align:center;">C</span>
<span class="t" style="top:428.90px;font-size:13px;line-height:17px;color:#eeeeee;font-weight:700;left:1020px;">commentor</span>
<span class="t" style="top:442.95px;font-size:11.7px;line-height:15px;color:#b8b8b8;letter-spacing:0.07px;left:1020.4px;">12/10/25, 11:07 AM</span>
<span class="t" style="top:465.70px;font-size:13px;line-height:17px;color:#e0e0e0;left:983.4px;">Check total ammount</span>
<span class="t" style="top:490.90px;font-size:13px;line-height:17px;color:#e0e0e0;left:983.4px;">Add reply</span>
<div style="left:983.7px;top:508.8px;width:54.4px;height:1px;background:repeating-linear-gradient(90deg,#bdbdbd 0 1.2px,transparent 1.2px 2.2px);"></div>
<svg class="i" style="left:1161px;top:433px;" width="16" height="16" viewBox="0 0 16 16"><path d="M1.6 13.2 L2.4 9.8 L10.4 1.8 a1.6 1.6 0 0 1 2.2 0 l0.8 0.8 a1.6 1.6 0 0 1 0 2.2 L5.4 12.8 Z M9 3.4 L11.8 6.2 M8.6 14.2 H14" fill="none" stroke="#b4b4b4" stroke-width="1.1"/></svg>
<svg class="i" style="left:1185px;top:432px;" width="14" height="17" viewBox="0 0 14 17"><path d="M1 3.6 H13 M4.6 3.4 V1.4 H9.4 V3.4 M2.4 3.8 V15.4 H11.6 V3.8 M5.6 6.4 V12.6 M8.4 6.4 V12.6" fill="none" stroke="#b4b4b4" stroke-width="1.1"/></svg>
<svg class="i" style="left:1208px;top:434px;" width="17" height="13" viewBox="0 0 17 13"><path d="M1.4 6.6 L6 11.2 L15.4 1.6" fill="none" stroke="#e6e6e6" stroke-width="1.5"/></svg>
</div></body></html>
